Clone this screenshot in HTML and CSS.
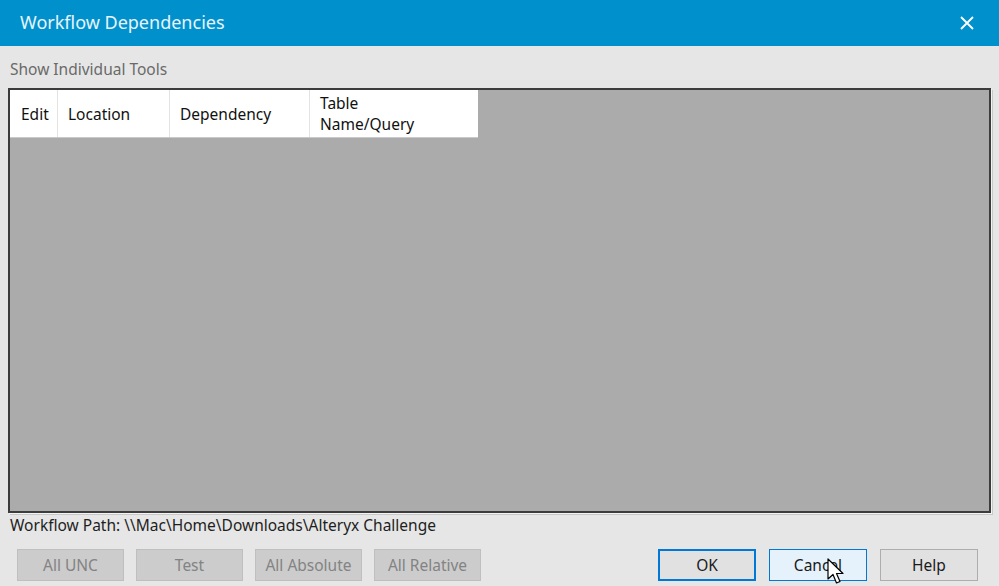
FILE: index.html
```html
<!DOCTYPE html>
<html lang="en">
<head>
  <meta charset="UTF-8" />
  <title>Workflow Dependencies</title>
  <link rel="stylesheet" href="styles.css">
</head>
<body>
  <div class="dialog">
    <div class="titlebar">
      <span class="title">Workflow Dependencies</span>
      <svg class="close" width="14" height="14" viewBox="0 0 14 14">
        <path d="M1 1 L13 13 M13 1 L1 13" stroke="#fff" stroke-width="1.8" />
      </svg>
    </div>

    <div class="content">
      <div class="option">Show Individual Tools</div>

      <div class="grid">
        <div class="grid-head">
          <div class="col col-edit">Edit</div>
          <div class="col col-location">Location</div>
          <div class="col col-dependency">Dependency</div>
          <div class="col col-table">Table<br>Name/Query</div>
        </div>
      </div>

      <div class="path">Workflow Path: \\Mac\Home\Downloads\Alteryx Challenge</div>

      <div class="buttons">
        <div class="group">
          <button class="btn disabled" disabled>All UNC</button>
          <button class="btn disabled" disabled>Test</button>
          <button class="btn disabled" disabled>All Absolute</button>
          <button class="btn disabled" disabled>All Relative</button>
        </div>
        <div class="group">
          <button class="btn default">OK</button>
          <button class="btn hover">Cancel
            <svg class="cursor" width="20" height="28" viewBox="0 0 20 28">
              <path d="M1 1 L1 21 L6 16.5 L9.5 25 L13 23.5 L9.5 15.5 L16 15.5 Z" fill="#fff" stroke="#000" stroke-width="1.2" stroke-linejoin="round" />
            </svg>
          </button>
          <button class="btn">Help</button>
        </div>
      </div>
    </div>
  </div>
</body>
</html>
```

FILE: styles.css
```css
* {
  margin: 0;
  padding: 0;
  box-sizing: border-box;
}

html,
body {
  width: 999px;
  height: 586px;
  overflow: hidden;
  background-color: #e6e6e6;
  font-family: "Noto Sans", "Open Sans", sans-serif;
}

.dialog {
  display: flex;
  flex-direction: column;
  height: 100%;
}

.titlebar {
  height: 46px;
  background-color: #0091cd;
  display: flex;
  align-items: center;
  justify-content: space-between;
  padding: 0 25px 2px 20px;
}

.title {
  color: #e8f4fb;
  font-size: 18px;
}

.close {
  margin-top: 2px;
}

.content {
  flex: 1;
  display: flex;
  flex-direction: column;
  padding: 12px 8px 0 8px;
}

.option {
  color: #6a6a6a;
  font-size: 15.5px;
  padding-left: 2px;
  height: 30px;
}

.grid {
  height: 425px;
  background-color: #ababab;
  border: 2px solid #3c3c3c;
  box-shadow: 1px 1px 0 #f4f4f4, 2px 2px 0 #c8c8c8;
}

.grid-head {
  display: flex;
  width: 468px;
  height: 48px;
  background-color: #fff;
  border-bottom: 1px solid #c9c9c9;
}

.col {
  display: flex;
  align-items: center;
  padding-left: 10px;
  font-size: 15.5px;
  color: #111;
  border-right: 1px solid #e3e3e3;
}

.col-edit {
  width: 48px;
  padding-left: 11px;
}

.col-location {
  width: 112px;
}

.col-dependency {
  width: 140px;
}

.col-table {
  width: 168px;
  line-height: 21px;
  border-right: none;
}

.path {
  font-size: 15.5px;
  color: #1e1e1e;
  padding: 1px 0 0 2px;
  height: 36px;
}

.buttons {
  display: flex;
  justify-content: space-between;
  padding: 0 13px 0 9px;
}

.group {
  display: flex;
  gap: 12px;
}

.group + .group {
  gap: 13px;
}

.btn {
  position: relative;
  height: 32px;
  background-color: #e1e1e1;
  border: 1px solid #adadad;
  font-family: inherit;
  font-size: 15.5px;
  color: #1a1a1a;
}

.disabled {
  width: 107px;
  background-color: #cccccc;
  border-color: #bfbfbf;
  color: #838383;
}

.group:last-child .btn {
  width: 98px;
}

.default {
  border: 2px solid #0078d7;
}

.hover {
  background-color: #e5f1fb;
  border-color: #0078d7;
}

.cursor {
  position: absolute;
  left: 57px;
  top: 8px;
}
```
